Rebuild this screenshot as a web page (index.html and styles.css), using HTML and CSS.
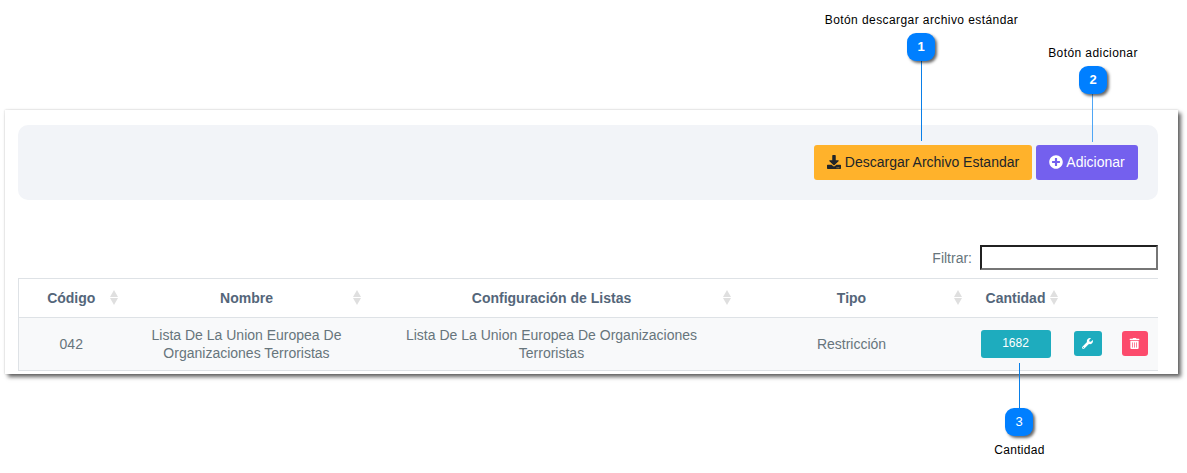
FILE: index.html
```html
<!DOCTYPE html>
<html lang="es">
<head>
    <meta charset="UTF-8">
    <meta name="viewport" content="width=device-width, initial-scale=1.0">
    <title>Listas</title>
    <link rel="stylesheet" href="styles.css">
</head>
<body>
    <div class="page">
        <div class="panel">
            <div class="toolbar">
                <button class="btn btn-orange">
                    <svg class="icon" viewBox="0 0 512 512"><path d="M216 0h80c13.3 0 24 10.7 24 24v168h87.7c17.8 0 26.7 21.5 14.1 34.1L269.7 378.3c-7.5 7.5-19.8 7.5-27.3 0L90.1 226.1c-12.6-12.6-3.7-34.1 14.1-34.1H192V24c0-13.3 10.7-24 24-24zm296 376v112c0 13.3-10.7 24-24 24H24c-13.3 0-24-10.7-24-24V376c0-13.3 10.7-24 24-24h146.7l49 49c20.1 20.1 52.5 20.1 72.6 0l49-49H488c13.3 0 24 10.7 24 24zm-124 88c0-11-9-20-20-20s-20 9-20 20 9 20 20 20 20-9 20-20zm64 0c0-11-9-20-20-20s-20 9-20 20 9 20 20 20 20-9 20-20z"/></svg>
                    Descargar Archivo Estandar
                </button>
                <button class="btn btn-purple">
                    <svg class="icon" viewBox="0 0 512 512"><path d="M256 8C119 8 8 119 8 256s111 248 248 248 248-111 248-248S393 8 256 8zm144 276c0 6.6-5.4 12-12 12h-92v92c0 6.6-5.4 12-12 12h-56c-6.6 0-12-5.4-12-12v-92h-92c-6.6 0-12-5.4-12-12v-56c0-6.6 5.4-12 12-12h92v-92c0-6.6 5.4-12 12-12h56c6.6 0 12 5.4 12 12v92h92c6.6 0 12 5.4 12 12v56z"/></svg>
                    Adicionar
                </button>
            </div>

            <div class="filter">
                <label for="filterInput">Filtrar:</label>
                <input id="filterInput" type="text">
            </div>

            <div class="table-wrap">
                <table class="list-table">
                    <colgroup>
                        <col class="col-code">
                        <col class="col-name">
                        <col class="col-config">
                        <col class="col-type">
                        <col class="col-qty">
                        <col class="col-tools">
                        <col class="col-delete">
                    </colgroup>
                    <thead>
                        <tr>
                            <th class="sort sort-a">Código</th>
                            <th class="sort sort-b">Nombre</th>
                            <th class="sort sort-c">Configuración de Listas</th>
                            <th class="sort sort-e">Tipo</th>
                            <th class="sort sort-d">Cantidad</th>
                            <th></th>
                            <th></th>
                        </tr>
                    </thead>
                    <tbody>
                        <tr>
                            <td>042</td>
                            <td>Lista De La Union Europea De Organizaciones Terroristas</td>
                            <td>Lista De La Union Europea De Organizaciones Terroristas</td>
                            <td>Restricción</td>
                            <td><span class="qty">1682</span></td>
                            <td>
                                <button class="tool tool-teal">
                                    <svg class="tool-icon" viewBox="0 0 512 512"><path d="M507.73 109.1c-2.24-9.03-13.54-12.09-20.12-5.51l-74.36 74.36-67.88-11.31-11.31-67.88 74.36-74.36c6.62-6.62 3.43-17.9-5.66-20.16-47.38-11.74-99.55.91-136.58 37.93-39.64 39.64-50.55 97.1-34.05 147.2L18.74 402.76c-24.99 24.99-24.99 65.51 0 90.5 24.99 24.99 65.51 24.99 90.5 0l213.21-213.21c50.12 16.71 107.47 5.68 147.37-34.22 37.07-37.07 49.7-89.32 37.91-136.73zM64 472c-13.25 0-24-10.75-24-24 0-13.26 10.75-24 24-24s24 10.74 24 24c0 13.25-10.75 24-24 24z"/></svg>
                                </button>
                            </td>
                            <td class="cell-delete">
                                <button class="tool tool-red">
                                    <svg class="tool-icon" viewBox="0 0 448 512"><path d="M32 464a48 48 0 0 0 48 48h288a48 48 0 0 0 48-48V128H32zm272-256a16 16 0 0 1 32 0v224a16 16 0 0 1-32 0zm-96 0a16 16 0 0 1 32 0v224a16 16 0 0 1-32 0zm-96 0a16 16 0 0 1 32 0v224a16 16 0 0 1-32 0zM432 32H312l-9.4-18.7A24 24 0 0 0 281.1 0H166.8a23.72 23.72 0 0 0-21.4 13.3L136 32H16A16 16 0 0 0 0 48v32a16 16 0 0 0 16 16h416a16 16 0 0 0 16-16V48a16 16 0 0 0-16-16z"/></svg>
                                </button>
                            </td>
                        </tr>
                    </tbody>
                </table>
            </div>
        </div>

        <!-- callouts over the screenshot -->
        <div class="callout-label label-1">Botón descargar archivo estándar</div>
        <div class="callout-line line-1"></div>
        <div class="badge badge-1">1</div>

        <div class="callout-label label-2">Botón adicionar</div>
        <div class="callout-line line-2"></div>
        <div class="badge badge-2">2</div>

        <div class="callout-line line-3"></div>
        <div class="badge badge-3">3</div>
        <div class="callout-label label-3">Cantidad</div>
    </div>
</body>
</html>
```

FILE: styles.css
```css
* {
    box-sizing: border-box;
}
html, body {
    height: 100%;
}
body {
    margin: 0;
    background: #fff;
    font-family: "Liberation Sans", Arial, sans-serif;
    font-size: 14px;
    color: #67757c;
    overflow: hidden;
}
.page {
    position: relative;
    height: 473px;
    padding: 110px 9px 0 5px;
}
.panel {
    background: #fff;
    padding: 15px 20px 3px 13px;
    box-shadow: 3px 3px 4px rgba(0, 0, 0, 0.6), 0 0 2px rgba(0, 0, 0, 0.2);
}
.toolbar {
    display: flex;
    justify-content: flex-end;
    gap: 4px;
    height: 75px;
    padding: 20px 20px 20px 0;
    background: #f2f4f8;
    border-radius: 10px;
}
.btn {
    display: flex;
    align-items: center;
    justify-content: center;
    gap: 4px;
    height: 35px;
    padding: 0 0 2px;
    border: none;
    border-radius: 3px;
    font-family: inherit;
    font-size: 14px;
}
.btn-orange {
    width: 218px;
    background: #ffb22b;
    color: #212529;
}
.btn-purple {
    width: 102px;
    gap: 3px;
    background: #7460ee;
    color: #fff;
}
.icon {
    width: 14px;
    height: 14px;
    fill: currentColor;
}
.filter {
    display: flex;
    justify-content: flex-end;
    align-items: center;
    gap: 8px;
    margin-top: 45px;
    height: 25px;
}
.filter input {
    width: 178px;
    height: 25px;
    border: 2px inset #767676;
    background: #fff;
}
.table-wrap {
    margin-top: 8px;
    overflow: hidden;
}
.list-table {
    width: 1140px;
    table-layout: fixed;
    border-collapse: collapse;
    border-top: 1px solid #dee2e6;
    border-left: 1px solid #dee2e6;
    text-align: center;
}
.col-code { width: 105px; }
.col-name { width: 246px; }
.col-config { width: 364px; }
.col-type { width: 236px; }
.col-qty { width: 92px; }
.col-tools { width: 52px; }
.col-delete { width: 45px; }
.list-table th {
    position: relative;
    height: 39px;
    padding: 0 0 1px;
    font-weight: bold;
    color: #54667a;
    border-bottom: 1px solid #dee2e6;
}
.list-table td {
    height: 53px;
    padding: 0;
    line-height: 18px;
    background: #f8f9fa;
    border-bottom: 1px solid #dee2e6;
}
.list-table td:nth-child(2),
.list-table td:nth-child(3) {
    padding: 0 12px;
}
.list-table td.cell-delete {
    padding-right: 3px;
}
/* sort arrows */
.sort::before,
.sort::after {
    content: "";
    position: absolute;
    width: 0;
    height: 0;
    border-left: 4px solid transparent;
    border-right: 4px solid transparent;
}
.sort::before {
    top: 11px;
    border-bottom: 7px solid #dfdfdf;
}
.sort::after {
    top: 19px;
    border-top: 7px solid #dfdfdf;
}
.sort-a::before, .sort-a::after { right: 6px; }
.sort-b::before, .sort-b::after { right: 9px; }
.sort-c::before, .sort-c::after { right: 3px; }
.sort-d::before, .sort-d::after { right: 4px; }
.sort-e::before, .sort-e::after { right: 8px; }
.qty {
    display: block;
    width: 70px;
    height: 28px;
    margin: 0 auto;
    border-radius: 3px;
    background: #1eacbe;
    color: #fff;
    font-size: 12px;
    line-height: 26px;
}
.tool {
    display: inline-flex;
    align-items: center;
    justify-content: center;
    height: 25px;
    margin-top: -2px;
    padding: 0;
    border: none;
    border-radius: 3px;
    vertical-align: middle;
}
.tool-teal {
    width: 28px;
    background: #1eacbe;
}
.tool-red {
    width: 26px;
    background: #fc4b6c;
}
.tool-icon {
    width: 11px;
    height: 11px;
    fill: #fff;
}
/* callouts */
.callout-label {
    position: absolute;
    font-size: 12px;
    color: #000;
    white-space: nowrap;
    transform: translateX(-50%);
}
.label-1 { left: 921.5px; top: 13px; letter-spacing: 0.42px; }
.label-2 { left: 1093px; top: 46px; letter-spacing: 0.42px; }
.label-3 { left: 1019.5px; top: 443px; letter-spacing: 0.3px; }
.callout-line {
    position: absolute;
    width: 1px;
    background: #0a7fe8;
}
.line-1 { left: 921px; top: 61px; height: 80px; }
.line-2 { left: 1092px; top: 94px; height: 48px; background: #4fa6f5; }
.line-3 { left: 1019px; top: 363px; height: 46px; }
.badge {
    position: absolute;
    width: 28px;
    height: 28px;
    border-radius: 9px;
    background: #007fff;
    box-shadow: 2px 2px 3px rgba(0, 0, 0, 0.6);
    color: #fff;
    font-size: 13px;
    font-weight: bold;
    line-height: 28px;
    text-align: center;
}
.badge-1 { left: 907px; top: 33px; }
.badge-2 { left: 1079px; top: 66px; }
.badge-3 { left: 1005px; top: 408px; font-weight: normal; }
```
